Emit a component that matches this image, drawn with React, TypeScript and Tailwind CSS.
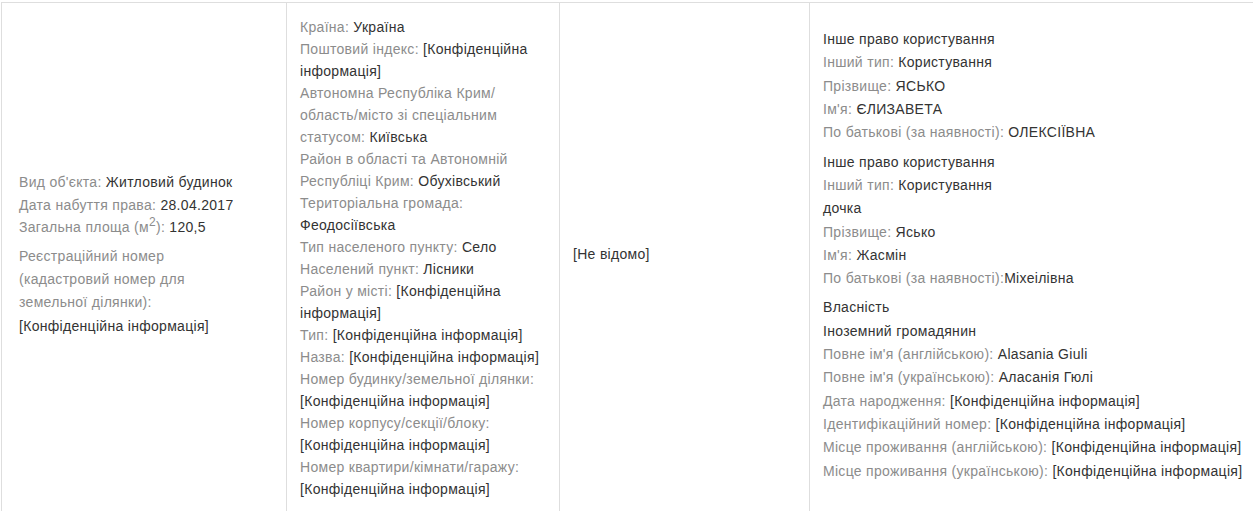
import React from 'react';

const Label: React.FC<{ children: React.ReactNode }> = ({ children }) => (
  <span className="text-[#8c8c8c]">{children}</span>
);

const Row: React.FC<{ label?: string; value?: React.ReactNode; sep?: string }> = ({ label, value, sep = ' ' }) => (
  <div>
    {label && <Label>{label}</Label>}
    {label && value ? sep : null}
    {value}
  </div>
);

const CONF = '[Конфіденційна інформація]';

const App: React.FC = () => {
  return (
    <div
      className="w-[1253px] h-[511px] overflow-hidden bg-white pt-[2px] pl-[1px] text-[14px] tracking-[0.3px] text-[#333]"
      style={{ fontFamily: '"Liberation Sans", Arial, sans-serif' }}
    >
      <div className="w-[1300px] grid grid-cols-[285px_273px_250px_1fr] border-t border-l border-[#dedede]">
        {/* Object */}
        <div className="flex items-center border-r border-b border-[#dedede] pl-[17px] pr-[13px] pt-[8px] pb-[14px]">
          <div>
            <div className="leading-[22.5px]">
              <Row label="Вид об'єкта:" value="Житловий будинок" />
              <Row label="Дата набуття права:" value="28.04.2017" />
              <div>
                <Label>
                  Загальна площа (м<sup className="text-[12px]">2</sup>):
                </Label>{' '}
                120,5
              </div>
            </div>
            <div className="mt-[6px] leading-[23.3px] max-w-[210px]">
              <Label>Реєстраційний номер (кадастровий номер для земельної ділянки):</Label>
              <div>{CONF}</div>
            </div>
          </div>
        </div>

        {/* Address */}
        <div className="border-r border-b border-[#dedede] px-[13px] pt-[13px] pb-[12px] leading-[22px]">
          <Row label="Країна:" value="Україна" />
          <Row label="Поштовий індекс:" value={CONF} />
          <Row label="Автономна Республіка Крим/область/місто зі спеціальним статусом:" value="Київська" />
          <Row label="Район в області та Автономній Республіці Крим:" value="Обухівський" />
          <Row label="Територіальна громада:" value="Феодосіївська" />
          <Row label="Тип населеного пункту:" value="Село" />
          <Row label="Населений пункт:" value="Лісники" />
          <Row label="Район у місті:" value={CONF} />
          <Row label="Тип:" value={CONF} />
          <Row label="Назва:" value={CONF} />
          <Row label="Номер будинку/земельної ділянки:" value={CONF} />
          <Row label="Номер корпусу/секції/блоку:" value={CONF} />
          <Row label="Номер квартири/кімнати/гаражу:" value={CONF} />
        </div>

        {/* Share */}
        <div className="flex items-center border-r border-b border-[#dedede] px-[13px] pt-[8px] pb-[14px]">
          <div>[Не відомо]</div>
        </div>

        {/* Subjects */}
        <div className="flex items-center border-r border-b border-[#dedede] px-[13px] pt-[9px] pb-[13px]">
          <div className="leading-[23.3px] flex flex-col gap-[6px]">
            <div>
              <div>Інше право користування</div>
              <Row label="Інший тип:" value="Користування" />
              <Row label="Прізвище:" value="ЯСЬКО" />
              <Row label="Ім'я:" value="ЄЛИЗАВЕТА" />
              <Row label="По батькові (за наявності):" value="ОЛЕКСІЇВНА" />
            </div>
            <div>
              <div>Інше право користування</div>
              <Row label="Інший тип:" value="Користування" />
              <div>дочка</div>
              <Row label="Прізвище:" value="Ясько" />
              <Row label="Ім'я:" value="Жасмін" />
              <Row label="По батькові (за наявності):" value="Міхеілівна" sep="" />
            </div>
            <div>
              <div>Власність</div>
              <div>Іноземний громадянин</div>
              <Row label="Повне ім'я (англійською):" value="Alasania Giuli" />
              <Row label="Повне ім'я (українською):" value="Аласанія Гюлі" />
              <Row label="Дата народження:" value={CONF} />
              <Row label="Ідентифікаційний номер:" value={CONF} />
              <Row label="Місце проживання (англійською):" value={CONF} />
              <Row label="Місце проживання (українською):" value={CONF} />
            </div>
          </div>
        </div>
      </div>
    </div>
  );
};

export default App;
